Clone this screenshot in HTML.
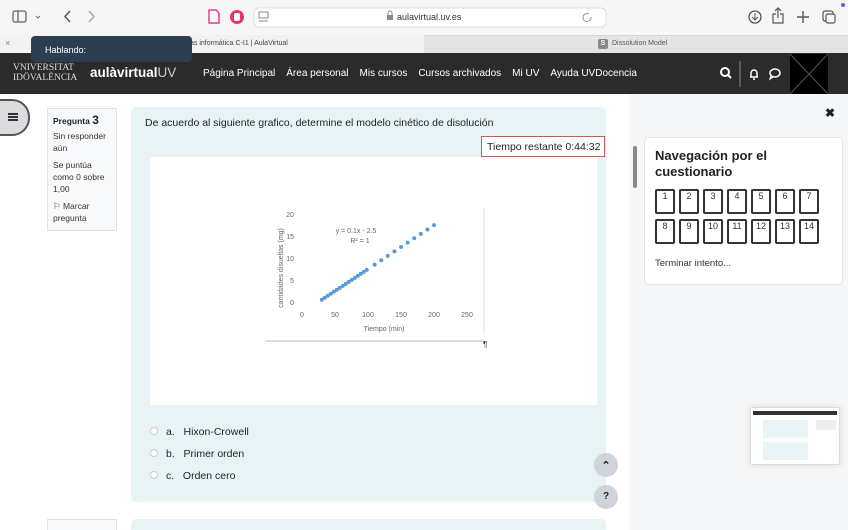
<!DOCTYPE html>
<html><head><meta charset="utf-8"><style>
*{box-sizing:border-box;margin:0;padding:0}
html,body{width:848px;height:530px;overflow:hidden}
body{font-family:"Liberation Sans",sans-serif;background:#fff;position:relative;color:#1d2125}
.abs{position:absolute}
.nb{width:20px;height:25px;border:2px solid #333;border-radius:2px;text-align:center;font-size:9px}
</style></head><body>
<div class="abs" style="left:0;top:0;width:848px;height:35px;background:#f6f6f6"></div>
<svg class="abs" style="left:0;top:0" width="848" height="35">
<rect x="13" y="11" width="13" height="11" rx="2" fill="none" stroke="#666" stroke-width="1.3"/><line x1="18" y1="11" x2="18" y2="22" stroke="#666" stroke-width="1.3"/>
<path d="M36 16l2 2 2-2" fill="none" stroke="#777" stroke-width="1"/>
<path d="M70 11l-5 5.5 5 5.5" fill="none" stroke="#555" stroke-width="1.5"/>
<path d="M89 11l5 5.5-5 5.5" fill="none" stroke="#aaa" stroke-width="1.5"/>
<path d="M209 10h7l3 3v10h-10z" fill="none" stroke="#e0408a" stroke-width="1.5"/>
<circle cx="237" cy="17" r="7" fill="#e8336b"/><rect x="234" y="13" width="6" height="8" rx="2" fill="#fff"/>
<rect x="254" y="8" width="352" height="19" rx="5" fill="#fff" stroke="#ddd"/>
<rect x="259" y="12" width="9" height="6" fill="none" stroke="#888"/><line x1="259" y1="21" x2="268" y2="21" stroke="#888"/>
<rect x="387" y="15" width="6" height="5" fill="#888"/><path d="M388 15v-2a2 2 0 0 1 4 0v2" fill="none" stroke="#888"/>
<path d="M589 14a4 4 0 1 0 2 3" fill="none" stroke="#999" stroke-width="1"/>
<circle cx="755" cy="17" r="6" fill="none" stroke="#555" stroke-width="1.3"/><path d="M755 13v6M752 17l3 3 3-3" fill="none" stroke="#555"/>
<path d="M776 14h-3v9h10v-9h-3M778 18v-9M775 11l3-3 3 3" fill="none" stroke="#555" stroke-width="1.2"/>
<path d="M803 11v12M797 17h12" stroke="#555" stroke-width="1.4"/>
<rect x="823" y="11" width="10" height="10" rx="2" fill="none" stroke="#555" stroke-width="1.2"/><rect x="826" y="14" width="9" height="9" rx="2" fill="#f6f6f6" stroke="#555" stroke-width="1.2"/>
<circle cx="843" cy="5" r="2" fill="#5b5bf0"/>
</svg>
<div class="abs" style="top:12px;font-size:9px;color:#333;left:397px">aulavirtual.uv.es</div>
<div class="abs" style="left:0;top:35px;width:848px;height:18px;background:#e4e4e4;border-top:1px solid #d6d6d6"></div>
<div class="abs" style="left:0;top:35px;width:424px;height:18px;background:#f2f2f2"></div>
<div class="abs" style="left:5px;top:38px;font-size:9px;color:#888">×</div>
<div class="abs" style="left:190px;top:40px;font-size:7px;color:#444">as informática C-I1 | AulaVirtual</div>
<div class="abs" style="left:598px;top:39px;width:10px;height:10px;background:#888;border-radius:2px;color:#fff;font-size:7px;text-align:center;line-height:10px;font-weight:bold">S</div>
<div class="abs" style="left:612px;top:40px;font-size:7px;color:#555">Dissolution Model</div>
<div class="abs" style="left:0;top:53px;width:848px;height:41px;background:#2b2b2b"></div>
<div class="abs" style="left:13px;top:63px;font-family:'Liberation Serif',serif;font-size:9.5px;color:#ddd;line-height:10px">VNIVERSITAT<br>IDÖVALÈNCIA</div>
<div class="abs" style="left:90px;top:65px;font-size:13.5px;color:#fff;font-weight:bold">aulàvirtual<span style="font-weight:normal;color:#ccc">UV</span></div>
<div class="abs" style="left:203px;top:68px;font-size:10px;color:#fff;white-space:nowrap">Página Principal<span style="margin-left:11px">Área personal</span><span style="margin-left:11px">Mis cursos</span><span style="margin-left:11px">Cursos archivados</span><span style="margin-left:11px">Mi UV</span><span style="margin-left:11px">Ayuda UVDocencia</span></div>
<svg class="abs" style="left:715px;top:53px" width="133" height="41">
<circle cx="10" cy="19" r="4" fill="none" stroke="#fff" stroke-width="2"/><line x1="13" y1="22" x2="16" y2="25" stroke="#fff" stroke-width="2"/>
<line x1="25" y1="8" x2="25" y2="34" stroke="#888"/>
<path d="M35 24h8M36 24v-4a3 3 0 0 1 6 0v4M38 26h2" fill="none" stroke="#fff" stroke-width="1.5"/>
<ellipse cx="60" cy="20" rx="5" ry="4" fill="none" stroke="#fff" stroke-width="1.5"/><path d="M56 23l-1 3 3-2" fill="none" stroke="#fff" stroke-width="1.2"/>
<rect x="75" y="1" width="38" height="40" fill="#000"/><path d="M75 1l38 40M113 1l-38 40" stroke="#555" stroke-width="1"/>
</svg>
<div class="abs" style="left:31px;top:36px;width:161px;height:26px;background:#2c3e50;border-radius:4px;color:#fff;font-size:9px;padding:9px 0 0 14px">Hablando:</div>
<div class="abs" style="left:630px;top:94px;width:218px;height:436px;background:#f6f7f8"></div>
<div class="abs" style="left:633px;top:146px;width:4px;height:42px;background:#888;border-radius:2px"></div>
<div class="abs" style="left:825px;top:106px;font-size:12px;font-weight:bold">✖</div>
<div class="abs" style="left:644px;top:137px;width:199px;height:148px;background:#fff;border:1px solid #e4e4e4;border-radius:5px"></div>
<div class="abs" style="left:655px;top:148px;font-size:13px;font-weight:bold;line-height:16px;color:#1d2125">Navegación por el<br>cuestionario</div>
<div class="abs" style="left:655px;top:189px;width:170px;color:#333">
<div style="display:flex;gap:4px"><div class="nb">1</div><div class="nb">2</div><div class="nb">3</div><div class="nb">4</div><div class="nb">5</div><div class="nb">6</div><div class="nb">7</div></div>
<div style="display:flex;gap:4px;margin-top:5px"><div class="nb">8</div><div class="nb">9</div><div class="nb">10</div><div class="nb">11</div><div class="nb">12</div><div class="nb">13</div><div class="nb">14</div></div>
</div>
<div class="abs" style="left:655px;top:258px;font-size:9.5px;color:#333">Terminar intento...</div>
<div class="abs" style="left:750px;top:407px;width:90px;height:58px;background:#fff;border:1px solid #ddd;border-radius:2px;box-shadow:0 0 8px rgba(0,0,0,.1)">
<div style="margin:3px 2px 0;height:4px;background:#333"></div>
<div style="position:absolute;left:12px;top:12px;width:45px;height:18px;background:#e7f3f5"></div>
<div style="position:absolute;left:12px;top:34px;width:45px;height:18px;background:#e7f3f5"></div>
<div style="position:absolute;left:65px;top:12px;width:20px;height:10px;background:#eee"></div>
</div>
<div class="abs" style="left:-20px;top:99px;width:50px;height:37px;border-radius:18px;background:#dadcdf;border:2px solid #555"></div>
<div class="abs" style="left:8px;top:113px;width:10px;height:8px;border-top:2px solid #333;border-bottom:2px solid #333"><div style="margin-top:1px;height:2px;background:#333"></div></div>
<div class="abs" style="left:47px;top:108px;width:70px;height:123px;background:#f8f9fa;border:1px solid #dee2e6;padding:5px 5px;font-size:8.5px;line-height:12px;color:#333">
<div style="font-weight:bold;color:#1d2125">Pregunta <span style="font-size:12px">3</span></div>
<div style="margin-top:3px">Sin responder aún</div>
<div style="margin-top:5px">Se puntúa como 0 sobre 1,00</div>
<div style="margin-top:5px">⚐ Marcar pregunta</div>
</div>
<div class="abs" style="left:131px;top:107px;width:475px;height:395px;background:#e7f3f5;border-radius:5px"></div>
<div class="abs" style="left:145px;top:117px;font-size:10.5px;color:#1d2125">De acuerdo al siguiente grafico, determine el modelo cinético de disolución</div>
<div class="abs" style="left:481px;top:136px;width:124px;height:21px;border:1px solid #d9534f;background:#fff"></div>
<div class="abs" style="left:487px;top:141px;font-size:10.5px;color:#1d2125">Tiempo restante 0:44:32</div>
<div class="abs" style="left:150px;top:157px;width:447px;height:248px;background:#fff"></div>
<svg class="abs" style="left:0;top:0" width="848" height="530" font-family="Liberation Sans, sans-serif">
<line x1="484" y1="208" x2="484" y2="335" stroke="#ddd"/>
<line x1="265" y1="341" x2="484" y2="341" stroke="#bbb"/>
<g font-size="7" fill="#666" text-anchor="end">
<text x="294" y="217">20</text><text x="294" y="239">15</text><text x="294" y="261">10</text><text x="294" y="283">5</text><text x="294" y="305">0</text></g>
<g font-size="7" fill="#666" text-anchor="middle">
<text x="302" y="317">0</text><text x="335" y="317">50</text><text x="368" y="317">100</text><text x="401" y="317">150</text><text x="434" y="317">200</text><text x="467" y="317">250</text>
<text x="384" y="331">Tiempo (min)</text>
<text x="356" y="233">y = 0.1x - 2.5</text><text x="360" y="243">R² = 1</text></g>
<text font-size="7" fill="#666" text-anchor="middle" transform="translate(283,268) rotate(-90)">cantidades disueltas (mg)</text>
<line x1="321.8" y1="299.8" x2="368" y2="269" stroke="#5b9bd5" stroke-width="4" stroke-linecap="round" stroke-dasharray="0 3.6"/>
<line x1="374.6" y1="264.6" x2="434.5" y2="224.8" stroke="#5b9bd5" stroke-width="4" stroke-linecap="round" stroke-dasharray="0 7.93"/>
<text x="483" y="347" font-size="8" fill="#333">¶</text>
</svg>
<div class="abs" style="left:150px;top:421px;font-size:10.5px;color:#1d2125;line-height:22px">
<div><span style="display:inline-block;width:8px;height:8px;border:1px solid #ccc;border-radius:50%;background:#fff;margin-right:8px"></span>a.&nbsp;&nbsp; Hixon-Crowell</div>
<div><span style="display:inline-block;width:8px;height:8px;border:1px solid #ccc;border-radius:50%;background:#fff;margin-right:8px"></span>b.&nbsp;&nbsp; Primer orden</div>
<div><span style="display:inline-block;width:8px;height:8px;border:1px solid #ccc;border-radius:50%;background:#fff;margin-right:8px"></span>c.&nbsp;&nbsp; Orden cero</div>
</div>
<div class="abs" style="left:594px;top:453px;width:24px;height:24px;border-radius:50%;background:#ced4da;text-align:center;font-size:11px;font-weight:bold;line-height:26px">⌃</div>
<div class="abs" style="left:594px;top:485px;width:24px;height:24px;border-radius:50%;background:#ced4da;text-align:center;font-size:10px;font-weight:bold;line-height:24px">?</div>
<div class="abs" style="left:131px;top:519px;width:475px;height:20px;background:#e7f3f5;border-radius:5px"></div>
<div class="abs" style="left:47px;top:519px;width:70px;height:20px;background:#f8f9fa;border:1px solid #dee2e6"></div>
</body></html>
